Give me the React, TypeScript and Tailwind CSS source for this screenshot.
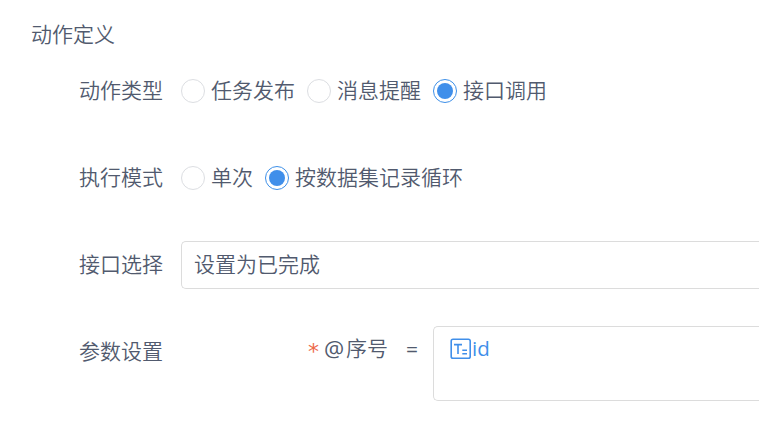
import React from "react";

const fontStack = "font-['Noto_Sans_CJK_SC',sans-serif]";

function Radio({ label, checked = false }: { label: string; checked?: boolean }) {
  return (
    <label className="flex h-8 items-center">
      <span
        className={
          checked
            ? "flex h-6 w-6 items-center justify-center rounded-full border border-[#3d8fe8] bg-white"
            : "h-6 w-6 rounded-full border border-[#dcdee2] bg-white"
        }
      >
        {checked && <span className="h-4 w-4 rounded-full bg-[#408fea]" />}
      </span>
      <span className="ml-[6px] pb-[4px]">{label}</span>
    </label>
  );
}

function Label({ children }: { children: React.ReactNode }) {
  return <div className="w-[102px] shrink-0 pb-[4px]">{children}</div>;
}

export default function App() {
  return (
    <main className={`h-[443px] w-[759px] overflow-hidden bg-white text-[21px] leading-8 font-[350] whitespace-nowrap text-[#515a6e] ${fontStack}`}>
      <h2 className="h-[50px] pt-[17px] pl-[31px] font-[350]">动作定义</h2>
      <div className="mt-[13px] flex h-14 items-center pl-[79px]">
        <Label>动作类型</Label>
        <div className="flex gap-3">
          <Radio label="任务发布" />
          <Radio label="消息提醒" />
          <Radio label="接口调用" checked />
        </div>
      </div>
      <div className="mt-[31px] flex h-14 items-center pl-[79px]">
        <Label>执行模式</Label>
        <div className="flex gap-3">
          <Radio label="单次" />
          <Radio label="按数据集记录循环" checked />
        </div>
      </div>
      <div className="mt-[35px] flex h-12 items-center pl-[79px]">
        <Label>接口选择</Label>
        <div className="flex h-12 flex-1 items-center rounded-l-[5px] border border-r-0 border-[#dcdcdc] pb-[4px] pl-3">设置为已完成</div>
      </div>
      <div className="mt-[37px] flex pl-[79px]">
        <div className="w-[228px] shrink-0 pt-[8px]">参数设置</div>
        <div className="flex w-[126px] shrink-0 pt-[5px]">
          <span className="w-[17px] pt-[5px] pl-px font-['DejaVu_Sans',sans-serif] text-[22px] font-normal text-[#ed6a4a]">*</span>
          <span className="flex w-[82px]">
            <span className="w-[22px] pt-[2px] font-['Open_Sans',sans-serif] text-[22.5px] font-normal">@</span>
            <span>序号</span>
          </span>
          <span className="pt-[2px] font-['Open_Sans',sans-serif] font-medium">=</span>
        </div>
        <div className="flex h-[75px] flex-1 items-start rounded-l-[5px] border border-r-0 border-[#dcdcdc] pt-[5px] pl-4 text-[#408fea]">
          <svg className="mt-[6px] h-[22px] w-[22px]" viewBox="0 0 22 22" fill="none" stroke="currentColor" strokeWidth="1.6">
            <rect x="1.2" y="1.2" width="19" height="19" rx="1.8" />
            <path d="M4 6.6h8M8 6.6v9.5M12.3 12.2h4.7M12.3 15.8h4.7" />
          </svg>
          <span className="font-['Open_Sans',sans-serif] text-[20.5px] font-medium">id</span>
        </div>
      </div>
    </main>
  );
}
